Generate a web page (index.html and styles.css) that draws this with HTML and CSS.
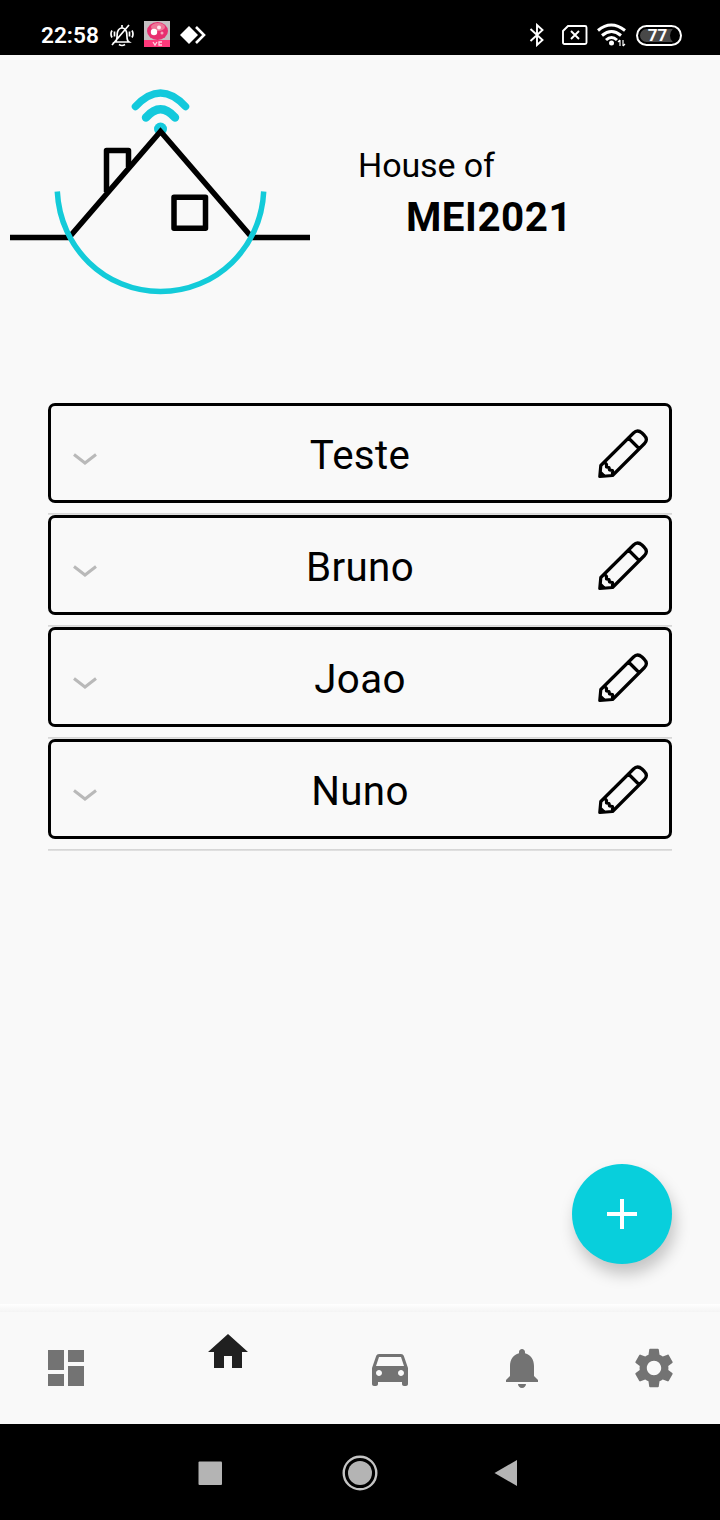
FILE: index.html
```html
<!DOCTYPE html>
<html lang="en">
<head>
<meta charset="utf-8">
<title>House of MEI2021</title>
<link rel="stylesheet" href="styles.css">
</head>
<body>
<div class="screen">
  <header class="status">
    <div class="status-left">
      <span class="clock">22:58</span>
      <svg class="mute" width="26" height="24" viewBox="0 0 26 24" fill="none" stroke="#fff" stroke-width="1.7"><path d="M6 19c3-2 1.500-6 2.500-10 1-3 2.500-4 4.500-4s3.500 1 4.500 4c1 4-.5 8 2.500 10zM13 2v3M10 21.500q3 2 6 0M3 7.500q-2 3.500 0 7M5.500 8.500v5M23 7.500q2 3.500 0 7M20.500 8.500v5M3 22L20 2"/></svg>
      <svg class="app" width="26" height="26" viewBox="0 0 26 26"><path fill="#c5bfc2" d="M0 0h26v26H0z"/><ellipse cx="13.500" cy="10" rx="10.500" ry="9" fill="#e82e70"/><ellipse cx="14" cy="6" rx="7" ry="4" fill="#ee7798"/><circle cx="10" cy="11" r="3.200" fill="#fff"/><circle cx="15" cy="6.500" r="2" fill="#ffe6ee"/><circle cx="18" cy="12" r="1.500" fill="#f8a5be"/><path fill="#ff397b" d="M0 19h26v7H0z"/><path d="M9 21l2 3 2-3m5 0h-3v3h3" fill="none" stroke="#ffd3df" stroke-width="1.300"/></svg>
      <svg class="diamond" width="26" height="20" viewBox="0 0 26 20"><path fill="#fff" d="M0 10L9 1l9 9-9 9z"/><path d="M16 2l8 8-8 8" fill="none" stroke="#fff" stroke-width="2.600"/></svg>
    </div>
    <div class="status-right">
      <svg width="16" height="24" viewBox="0 0 16 24" fill="none" stroke="#fff" stroke-width="1.900"><path d="M1.500 6l12 11L8 22V2l5.500 5-12 11"/></svg>
      <svg class="sim" width="26" height="20" viewBox="0 0 26 20" fill="none" stroke="#fff" stroke-width="1.900"><path d="M6 1h17q1.500 0 1.500 1.500v15q0 1.500-1.500 1.500H2.500Q1 19 1 17.500V6zM9 6l8 8m0-8l-8 8"/></svg>
      <svg class="wifi" width="30" height="24" viewBox="0 0 30 24" fill="none" stroke="#fff" stroke-width="3"><path d="M1 7.500q13-11 27 0M5 12.500q9.500-8 19 0M9 17q5.500-5 11 0"/><circle cx="14.500" cy="20" r="2.500" fill="#fff" stroke="none"/><path d="M23 17v6m0-6l-2 2m5-2v6m0 0l2-2" stroke-width="1.200"/></svg>
      <span class="battery">77</span>
    </div>
  </header>

  <main class="content">
    <section class="hero">
      <svg class="logo" width="300" height="210" viewBox="10 87 300 210" fill="none">
        <g stroke="#13c9dc" stroke-linecap="round"><path d="M135.500 106.500Q160.500 79.500 185.500 106.500" stroke-width="7.500"/><path d="M146 117.500Q160.500 101 175 117.500" stroke-width="8.500"/></g>
        <circle cx="160.500" cy="129" r="6.500" fill="#13c9dc"/>
        <g stroke="#000" stroke-width="5.500"><path d="M10 237.500H69L160.500 131.500 252 237.500H310"/><path d="M106.500 192V150.500H128.500V167" stroke-linejoin="round"/><path d="M174 197.200h31.500v31H174z" stroke-linejoin="round"/></g>
        <path d="M57.300 191.500C60 248 105 291.500 160.500 291.500S261 248 263.700 191.500" stroke="#13cbd9" stroke-width="5.500"/>
      </svg>
      <div class="house-name">
        <span class="prefix">House of</span>
        <strong class="name">MEI2021</strong>
      </div>
    </section>

    <ul class="rooms">
      <li class="row"><div class="card"><svg class="chevron" width="24" height="14" viewBox="0 0 24 14"><path d="M1 1.500l11 8.500 11-8.500"/></svg><span class="label">Teste</span><svg class="pencil" width="52" height="52" viewBox="0 0 52 52"><use href="#pencil"/></svg></div></li>
      <li class="row"><div class="card"><svg class="chevron" width="24" height="14" viewBox="0 0 24 14"><path d="M1 1.500l11 8.500 11-8.500"/></svg><span class="label">Bruno</span><svg class="pencil" width="52" height="52" viewBox="0 0 52 52"><use href="#pencil"/></svg></div></li>
      <li class="row"><div class="card"><svg class="chevron" width="24" height="14" viewBox="0 0 24 14"><path d="M1 1.500l11 8.500 11-8.500"/></svg><span class="label">Joao</span><svg class="pencil" width="52" height="52" viewBox="0 0 52 52"><use href="#pencil"/></svg></div></li>
      <li class="row"><div class="card"><svg class="chevron" width="24" height="14" viewBox="0 0 24 14"><path d="M1 1.500l11 8.500 11-8.500"/></svg><span class="label">Nuno</span><svg class="pencil" width="52" height="52" viewBox="0 0 52 52"><defs><path id="pencil" d="M2.800 48.500L3.800 37.500 36.500 5Q40.500 1 45 5L47 7Q51.500 11.500 47.500 15.500L15.500 47.500zM31.500 10L42 20.500M4 37.500Q7.500 32.500 9.500 36.500V39L12 39.500 12.500 42 15.500 42.500 15.500 47M3.500 44.500l3.500 3.500-4 .3z"/></defs><use href="#pencil"/></svg></div></li>
    </ul>

    <button class="fab" aria-label="Add"><svg width="30" height="30" viewBox="0 0 30 30"><path d="M15 0v30M0 15h30" stroke="#fff" stroke-width="4"/></svg></button>
  </main>

  <nav class="tabs">
    <a class="tab"><svg viewBox="0 0 24 24"><path d="M3 13h8V3H3v10zm0 8h8v-6H3v6zm10 0h8V11h-8v10zm0-18v6h8V3h-8z"/></svg></a>
    <a class="tab active"><svg viewBox="0 0 24 24"><path d="M10 20v-6h4v6h5v-8h3L12 3 2 12h3v8z"/></svg></a>
    <a class="tab"><svg viewBox="0 0 24 24"><path d="M18.920 6.010C18.720 5.420 18.160 5 17.500 5h-11c-.66 0-1.210.42-1.420 1.010L3 12v8c0 .55.45 1 1 1h1c.55 0 1-.45 1-1v-1h12v1c0 .55.45 1 1 1h1c.55 0 1-.45 1-1v-8l-2.080-5.990zM6.500 16c-.83 0-1.500-.67-1.500-1.500S5.670 13 6.500 13s1.500.67 1.500 1.500S7.330 16 6.500 16zm11 0c-.83 0-1.500-.67-1.500-1.500s.67-1.500 1.500-1.500 1.500.67 1.500 1.500-.67 1.500-1.500 1.500zM5 11l1.500-4.500h11L19 11H5z"/></svg></a>
    <a class="tab"><svg viewBox="0 0 24 24"><path d="M12 22c1.100 0 2-.9 2-2h-4c0 1.100.89 2 2 2zm6-6v-5c0-3.070-1.640-5.640-4.500-6.320V4c0-.83-.67-1.500-1.500-1.500s-1.500.67-1.500 1.500v.68C7.630 5.360 6 7.920 6 11v5l-2 2v1h16v-1l-2-2z"/></svg></a>
    <a class="tab"><svg viewBox="0 0 24 24"><path d="M19.140 12.940c.04-.3.060-.61.060-.94 0-.32-.02-.64-.07-.94l2.030-1.580c.18-.14.230-.41.120-.61l-1.920-3.320c-.12-.22-.37-.29-.59-.22l-2.390.96c-.5-.38-1.030-.7-1.620-.94l-.36-2.540c-.04-.24-.24-.41-.48-.41h-3.840c-.24 0-.43.17-.47.41l-.36 2.540c-.59.24-1.130.57-1.620.94l-2.390-.96c-.22-.08-.47 0-.59.22L2.740 8.870c-.12.210-.08.470.12.610l2.030 1.580c-.05.3-.09.63-.09.940s.02.640.07.940l-2.030 1.580c-.18.140-.23.410-.12.610l1.920 3.320c.12.220.37.290.59.220l2.390-.96c.5.380 1.030.7 1.620.94l.36 2.540c.05.240.24.410.48.410h3.840c.24 0 .44-.17.470-.41l.36-2.540c.59-.24 1.130-.56 1.620-.94l2.390.96c.22.080.47 0 .59-.22l1.920-3.320c.12-.22.070-.47-.12-.61l-2.010-1.580zM12 15.600c-1.980 0-3.600-1.620-3.600-3.600s1.620-3.600 3.600-3.600 3.600 1.620 3.600 3.600-1.620 3.600-3.600 3.600z"/></svg></a>
  </nav>

  <footer class="system">
    <svg width="24" height="24" viewBox="0 0 24 24"><rect x=".5" y=".5" width="23.500" height="23.500" rx="1" fill="#b4b4b4"/></svg>
    <svg class="home-key" width="36" height="36" viewBox="0 0 36 36"><circle cx="18" cy="18" r="16.300" fill="none" stroke="#c4c4c4" stroke-width="2.400"/><circle cx="18" cy="18" r="12" fill="#b4b4b4"/></svg>
    <svg width="24" height="28" viewBox="0 0 24 28"><path d="M.5 14L23 1v26z" fill="#b4b4b4"/></svg>
  </footer>
</div>
</body>
</html>
```
FILE: styles.css
```css
* { box-sizing: border-box; }
body { margin: 0; font-family: Roboto, "Liberation Sans", sans-serif; color: #000; }
svg { display: block; flex: none; }
.screen { width: 720px; height: 1520px; display: flex; flex-direction: column; background: #f9f9f9; overflow: hidden; }

.status { height: 55px; flex: none; background: #000; color: #fff; display: flex; justify-content: space-between; padding: 14px 38px 0 41px; }
.status-left, .status-right { display: flex; align-items: center; height: 42px; }
.clock { font-size: 22.6px; font-weight: 600; line-height: 40px; width: 68px; padding-top: 2px; }
.app { margin-left: 9px; margin-top: -2px; }
.diamond { margin-left: 10px; }
.sim { margin-left: 17px; }
.wifi { margin-left: 9px; }
.battery { width: 46px; height: 21px; margin-left: 9px; border: 2px solid #fff; border-radius: 11px; background: #000; box-shadow: inset 0 0 0 2px #000, inset 32px 0 0 #484848; text-align: center; font-size: 17px; font-weight: 700; line-height: 17px; padding-right: 3px; }

.content { flex: 1; min-height: 0; display: flex; flex-direction: column; }
.hero { display: flex; padding: 32px 10px 0; height: 348px; flex: none; }
.house-name { margin-left: 48px; padding-top: 58px; display: flex; flex-direction: column; }
.prefix { font-size: 34px; line-height: 40px; letter-spacing: -.1px; }
.name { font-size: 40.4px; line-height: 48px; letter-spacing: .5px; margin: 9px 0 0 48px; }

.rooms { list-style: none; margin: 0 48px; padding: 0; }
.row { height: 112px; }
.row::after { content: ""; display: block; height: 2px; margin-top: 10px; background: linear-gradient(#d2d2d2, #e4e4e4); }
.card { height: 100px; border: 3px solid #000; border-radius: 7px; display: flex; align-items: center; justify-content: space-between; padding: 0 20px 0 22px; }
.chevron { margin-top: 14px; }
.chevron path { fill: none; stroke: #b9b9b9; stroke-width: 3; }
.label { flex: 1; text-align: center; font-size: 40.3px; line-height: 48px; letter-spacing: .35px; padding-left: 26px; margin-top: 5px; }
.pencil { fill: none; stroke: #000; stroke-width: 3.2; stroke-linejoin: round; margin-top: 1px; }

.fab { align-self: flex-end; margin: auto 48px 40px 0; width: 100px; height: 100px; border: 0; border-radius: 50%; background: #08cfdc; display: grid; place-items: center; flex: none; padding: 0; box-shadow: 3px 10px 16px rgba(0,0,0,.22); }

.tabs { height: 120px; flex: none; display: flex; justify-content: space-between; align-items: center; padding: 8px 42px 0; background: linear-gradient(#fff, #f4f4f4 8px, #f9f9f9 8px); }
.tab svg { width: 48px; height: 48px; fill: #737373; }
.tab.active svg { fill: #202020; }
.tab.active { align-self: flex-start; padding-top: 16px; margin: 0 30px; }

.system { height: 96px; flex: none; background: #000; display: flex; align-items: center; justify-content: space-between; padding: 1px 202px 0 198px; }
.home-key { margin-left: 3px; }
```
